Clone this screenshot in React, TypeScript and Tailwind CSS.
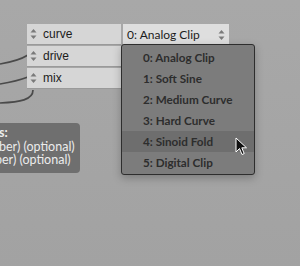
import React from 'react';

const options = ['0: Analog Clip', '1: Soft Sine', '2: Medium Curve', '3: Hard Curve', '4: Sinoid Fold', '5: Digital Clip'];

function Stepper({ className = '' }: { className?: string }) {
  return (
    <svg width="7" height="12" viewBox="0 0 7 12" className={className}>
      <path d="M0.5 4.5 L3.5 1 L6.5 4.5 Z" fill="#7a7a7a" />
      <path d="M0.5 7.5 L3.5 11 L6.5 7.5 Z" fill="#7a7a7a" />
    </svg>
  );
}

function Row({ label }: { label: string }) {
  return (
    <div className="flex h-[21px] w-[94px] items-center gap-[6px] bg-[#d6d6d6] pl-[3px] text-[12px] text-[#1c1c1c] border-b border-[#9a9a9a]">
      <Stepper />
      <span>{label}</span>
    </div>
  );
}

export default function App() {
  const selected = 4;
  return (
    <div
      className="relative h-[266px] w-[300px] overflow-hidden bg-gradient-to-b from-[#a8a8a8] to-[#a2a2a2]"
      style={{ fontFamily: '"Liberation Sans", Arial, sans-serif' }}
    >
      {/* cables */}
      <svg className="absolute left-0 top-0" width="300" height="266">
        <g stroke="#4a4a4a" strokeWidth="1.7" fill="none">
          <path d="M0 64 C 12 62, 20 60, 28 55" />
          <path d="M0 84 C 12 82, 20 80, 28 77" />
          <path d="M0 103 C 20 102, 33 100, 33 90" />
        </g>
      </svg>

      {/* object inlets */}
      <div className="absolute left-[27px] top-[24px] flex gap-[2px]">
        <div className="flex flex-col gap-[1px]">
          <Row label="curve" />
          <Row label="drive" />
          <Row label="mix" />
        </div>
        <div className="flex h-[21px] w-[106px] items-center justify-between bg-[#dedede] pl-[4px] pr-[4px] text-[12px] text-[#1c1c1c]" style={{ fontFamily: 'Lato, sans-serif' }}>
          <span>0: Analog Clip</span>
          <Stepper />
        </div>
      </div>

      {/* tooltip */}
      <div className="absolute left-0 top-[123px] h-[50px] w-[80px] rounded-r-[4px] bg-[#6f6f6f] pt-[3px] text-[12.5px] leading-[13.5px] text-[#ececec]" style={{ fontFamily: 'Lato, sans-serif' }}>
        <div className="-ml-[1px] font-bold">s:</div>
        <div className="-ml-[1px] whitespace-nowrap">ber) (optional)</div>
        <div className="-ml-[5px] whitespace-nowrap">ber) (optional)</div>
      </div>

      {/* dropdown menu */}
      <div
        className="absolute left-[121px] top-[44px] w-[134px] rounded-[3px] border border-[#2e2e2e] bg-[#7c7c7c] pt-[2px] pb-[1px] shadow-[0_3px_8px_rgba(0,0,0,0.25)]"
        style={{ fontFamily: 'Lato, sans-serif' }}
      >
        {options.map((o, i) => (
          <div
            key={o}
            className={`flex h-[21px] items-center pl-[21px] text-[11.7px] font-bold text-[#2d2d2d] ${i === selected ? 'bg-[#6e6e6e]' : ''}`}
          >
            {o}
          </div>
        ))}
      </div>

      {/* cursor */}
      <svg className="absolute left-[235px] top-[137px]" width="14" height="20" viewBox="0 0 14 20">
        <path d="M1 1 L1 15 L4.5 11.5 L7 17.5 L9.2 16.6 L6.8 10.8 L11.5 10.8 Z" fill="#111" stroke="#fff" strokeWidth="1" strokeLinejoin="round" />
      </svg>
    </div>
  );
}
